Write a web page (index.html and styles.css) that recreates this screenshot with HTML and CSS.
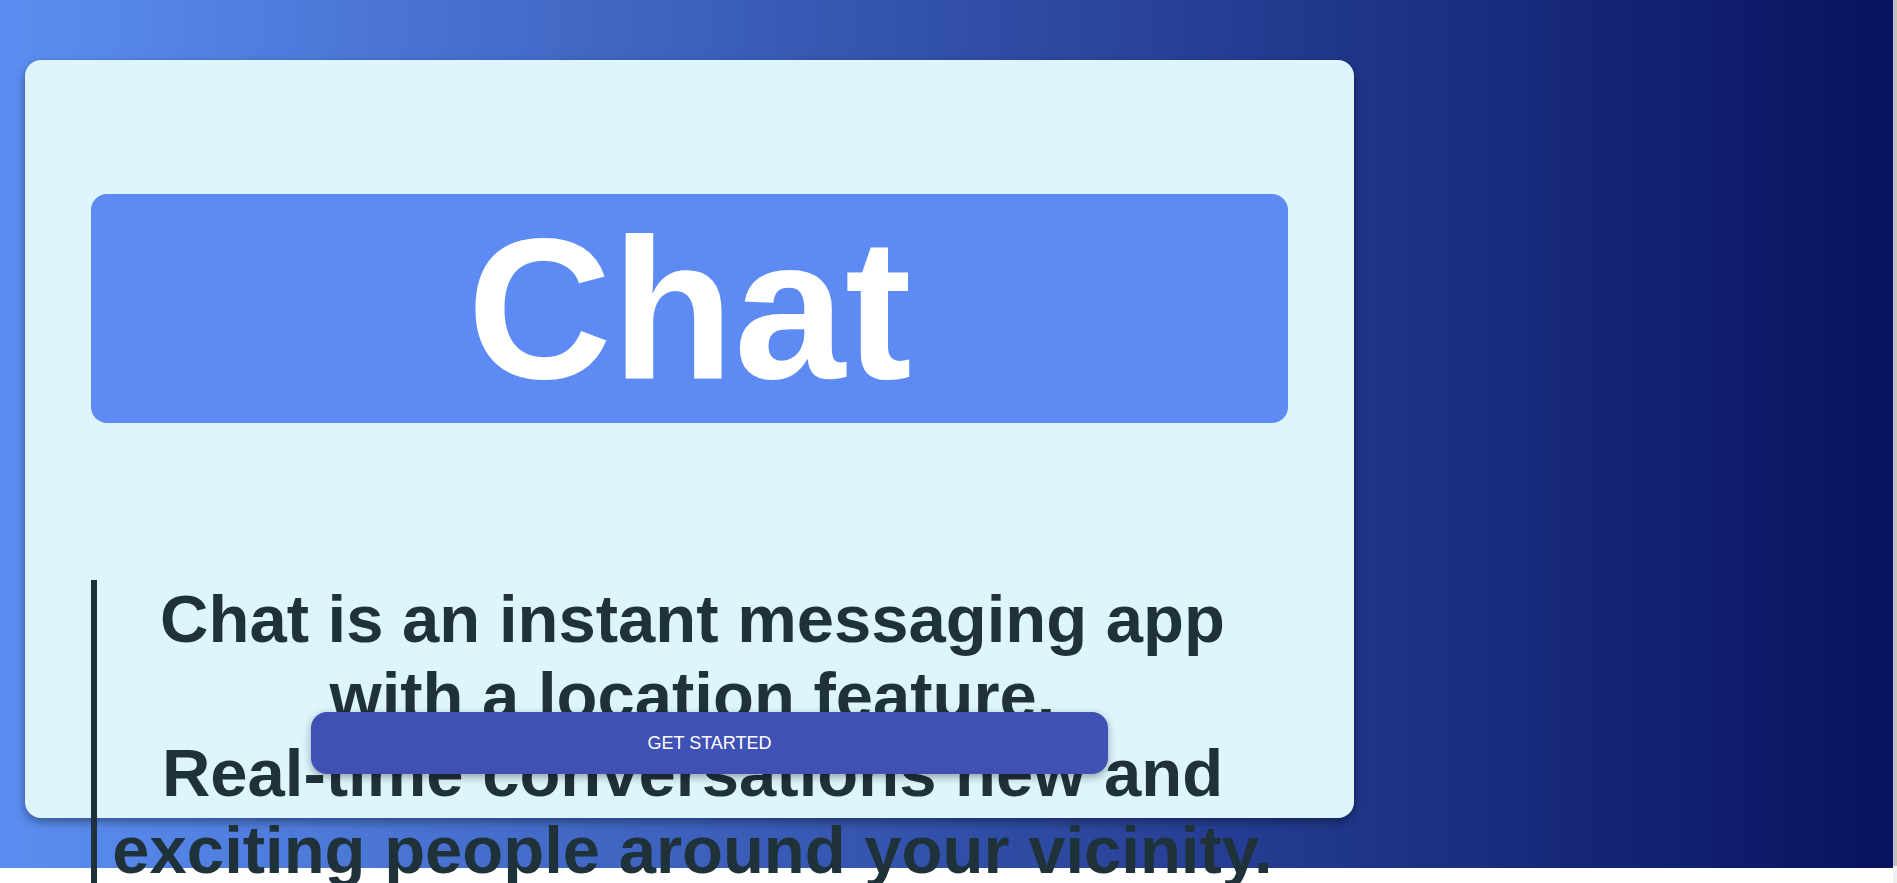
FILE: index.html
```html
<!DOCTYPE html>
<html lang="en">
<head>
<meta charset="utf-8">
<title>Chat</title>
<link rel="stylesheet" href="styles.css">
</head>
<body>
<section class="hero">
  <div class="card">
    <div class="brand"><h1 class="brand-title">Chat</h1></div>
    <blockquote class="intro">
      <p class="intro-line">Chat is an instant messaging app with a location feature.</p>
      <p class="intro-line">Real-time conversations new and exciting people around your vicinity.</p>
    </blockquote>
    <button class="cta" type="button">GET STARTED</button>
  </div>
</section>
<div class="scroll-strip" aria-hidden="true"></div>
</body>
</html>
```

FILE: styles.css
```css
html {
  margin: 0;
  padding: 0;
  overflow-x: hidden;
  background: #ffffff;
}
body {
  margin: 0;
  padding: 0;
  min-height: 892px;
  font-family: "Liberation Sans", Arial, sans-serif;
}
::-webkit-scrollbar {
  width: 0;
  height: 0;
}
.scroll-strip {
  position: fixed;
  top: 0;
  right: 0;
  width: 4px;
  height: 100%;
  background: linear-gradient(to bottom, #c1c1c1 0, #c1c1c1 866px, #f1f1f1 866px);
}
.hero {
  height: 868px;
  margin-right: 4px;
  box-sizing: border-box;
  padding: 60px 0 0 25px;
  background: linear-gradient(to right, #5b8ef2, #08125f);
}
.card {
  position: relative;
  box-sizing: border-box;
  width: 1329px;
  height: 758px;
  padding: 134px 66px 0 66px;
  background: #def5fe;
  border-radius: 16px;
  box-shadow: 0 4px 10px rgba(0, 0, 0, 0.38);
  display: flex;
  flex-direction: column;
  gap: 157px;
}
.brand {
  background: #5d8bf3;
  border-radius: 16px;
}
.brand-title {
  margin: 0;
  font-size: 200px;
  font-weight: 700;
  color: #ffffff;
  text-align: center;
  line-height: 229px;
}
.intro {
  margin: 0;
  border-left: 6px solid #1f323a;
  color: #1f323a;
  text-align: center;
  font-size: 67px;
  font-weight: 700;
}
.intro-line {
  margin: 0;
}
.cta {
  position: absolute;
  z-index: 1;
  left: 286px;
  top: 652px;
  width: 797px;
  height: 62px;
  border: none;
  border-radius: 16px;
  background: #3f51b5;
  color: #ffffff;
  font-family: "Liberation Sans", Arial, sans-serif;
  font-size: 18px;
  box-shadow: 0 3px 8px rgba(0, 0, 0, 0.35);
}
```
